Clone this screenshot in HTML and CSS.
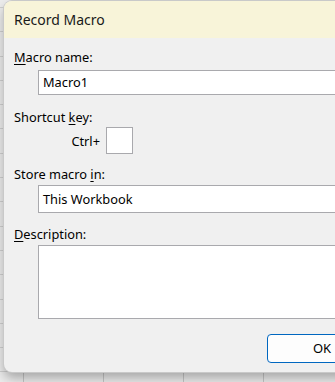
FILE: index.html
```html
<!DOCTYPE html>
<html>
<head>
<meta charset="utf-8">
<link rel="stylesheet" href="styles.css">
</head>
<body>
<div class="dialog">
  <div class="titlebar">Record Macro</div>
  <div class="content">
    <div class="label"><u>M</u>acro name:</div>
    <div class="field field-name">Macro1</div>
    <div class="label label-shortcut">Shortcut <u>k</u>ey:</div>
    <div class="ctrl-row">
      <span class="ctrl-text">Ctrl+</span>
      <div class="keybox"></div>
    </div>
    <div class="label label-store">Store macro <u>i</u>n:</div>
    <div class="field field-store">This Workbook</div>
    <div class="label label-desc"><u>D</u>escription:</div>
    <div class="textarea"></div>
    <div class="buttons">
      <div class="btn-ok">OK</div>
    </div>
  </div>
</div>
</body>
</html>
```

FILE: styles.css
```css
html, body {
  margin: 0;
  padding: 0;
}
body {
  width: 335px;
  height: 382px;
  overflow: hidden;
  box-sizing: border-box;
  padding: 1px 0 0 4px;
  font-family: "Segoe UI", "Noto Sans", "Open Sans", sans-serif;
  color: #000;
  background-color: #ececec;
  background-image:
    repeating-linear-gradient(to right, transparent 0, transparent 23px, #c6c6c6 23px, #c6c6c6 24px, transparent 24px, transparent 80px),
    repeating-linear-gradient(to bottom, transparent 0, transparent 7px, #cfcfcf 7px, #cfcfcf 8px, transparent 8px, transparent 24.3px);
}
.dialog {
  width: 345px;
  height: 371px;
  background: #f0f0f0;
  border-radius: 8px 0 0 8px;
  box-shadow: 0 0 0 1px #c9c9c9, 0 6px 12px rgba(0, 0, 0, 0.3);
  overflow: hidden;
}
.titlebar {
  height: 37px;
  box-sizing: border-box;
  background: #f8f4d9;
  padding-left: 10px;
  font-size: 14px;
  line-height: 38px;
  color: #1a1a1a;
}
.content {
  padding: 10px 0 0 10px;
  font-size: 12.8px;
}
.label {
  height: 18px;
  line-height: 18px;
}
.label u {
  text-underline-offset: 2px;
}
.field {
  margin: 4px 0 0 24px;
  height: 25px;
  box-sizing: border-box;
  border: 1px solid #a9a9ad;
  background: #fff;
  padding-left: 4px;
  line-height: 23px;
}
.label-shortcut {
  margin-top: 13px;
}
.ctrl-row {
  margin-top: 1px;
  width: 119px;
  display: flex;
  justify-content: flex-end;
  align-items: center;
  gap: 6px;
}
.keybox {
  width: 27px;
  height: 27px;
  box-sizing: border-box;
  border: 1px solid #a9a9ad;
  background: #fff;
}
.label-store {
  margin-top: 11px;
}
.field-store {
  margin-top: 2px;
  height: 28px;
  line-height: 26px;
}
.label-desc {
  margin-top: 12px;
}
.textarea {
  margin: 2px 0 0 24px;
  height: 74px;
  box-sizing: border-box;
  border: 1px solid #a9a9ad;
  background: #fff;
}
.buttons {
  margin-top: 15px;
  padding-left: 253px;
}
.btn-ok {
  width: 110px;
  height: 29px;
  box-sizing: border-box;
  border: 1.5px solid #0067c0;
  border-radius: 4px;
  background: #fdfdfd;
  text-align: center;
  line-height: 26px;
  font-size: 13px;
}
```
